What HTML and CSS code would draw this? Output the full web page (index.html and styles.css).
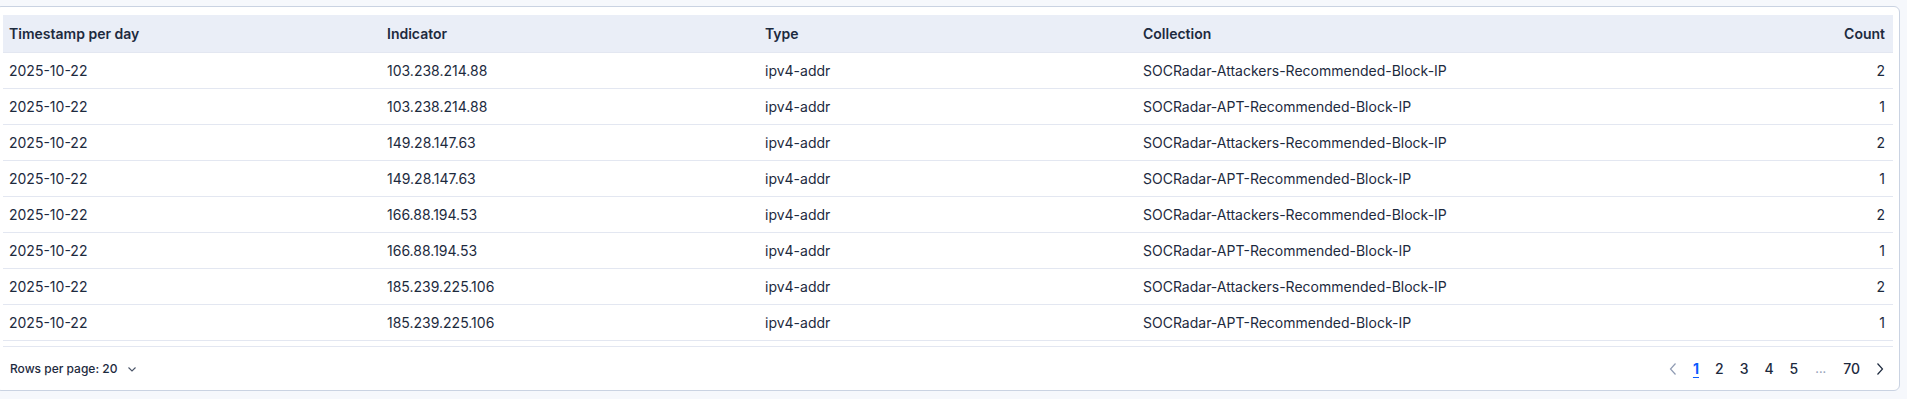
FILE: index.html
```html
<!DOCTYPE html>
<html>
<head>
<meta charset="utf-8">
<link rel="stylesheet" href="styles.css">
</head>
<body>
<div class="card">
  <table class="grid">
    <thead>
      <tr><th>Timestamp per day</th><th>Indicator</th><th>Type</th><th>Collection</th><th class="num">Count</th></tr>
    </thead>
    <tbody>
      <tr><td>2025-10-22</td><td>103.238.214.88</td><td>ipv4-addr</td><td>SOCRadar-Attackers-Recommended-Block-IP</td><td class="num">2</td></tr>
      <tr><td>2025-10-22</td><td>103.238.214.88</td><td>ipv4-addr</td><td>SOCRadar-APT-Recommended-Block-IP</td><td class="num">1</td></tr>
      <tr><td>2025-10-22</td><td>149.28.147.63</td><td>ipv4-addr</td><td>SOCRadar-Attackers-Recommended-Block-IP</td><td class="num">2</td></tr>
      <tr><td>2025-10-22</td><td>149.28.147.63</td><td>ipv4-addr</td><td>SOCRadar-APT-Recommended-Block-IP</td><td class="num">1</td></tr>
      <tr><td>2025-10-22</td><td>166.88.194.53</td><td>ipv4-addr</td><td>SOCRadar-Attackers-Recommended-Block-IP</td><td class="num">2</td></tr>
      <tr><td>2025-10-22</td><td>166.88.194.53</td><td>ipv4-addr</td><td>SOCRadar-APT-Recommended-Block-IP</td><td class="num">1</td></tr>
      <tr><td>2025-10-22</td><td>185.239.225.106</td><td>ipv4-addr</td><td>SOCRadar-Attackers-Recommended-Block-IP</td><td class="num">2</td></tr>
      <tr><td>2025-10-22</td><td>185.239.225.106</td><td>ipv4-addr</td><td>SOCRadar-APT-Recommended-Block-IP</td><td class="num">1</td></tr>
    </tbody>
  </table>
  <div class="footer">
    <div class="rows">Rows per page: 20
      <svg class="chev" width="10" height="10" viewBox="0 0 10 10"><path d="M1.5 3.5 L5 7 L8.5 3.5" fill="none" stroke="#4a5468" stroke-width="1.1"/></svg>
    </div>
    <div class="pager">
      <span class="pg arrow disabled"><svg width="10" height="14" viewBox="0 0 10 14"><path d="M7.5 1.5 L2.5 7 L7.5 12.5" fill="none" stroke="#8f9bb3" stroke-width="1.2"/></svg></span>
      <span class="pg active">1</span>
      <span class="pg">2</span>
      <span class="pg">3</span>
      <span class="pg">4</span>
      <span class="pg">5</span>
      <span class="pg dots">...</span>
      <span class="pg">70</span>
      <span class="pg arrow"><svg width="10" height="14" viewBox="0 0 10 14"><path d="M2.5 1.5 L7.5 7 L2.5 12.5" fill="none" stroke="#1d2a3e" stroke-width="1.2"/></svg></span>
    </div>
  </div>
</div>
</body>
</html>
```

FILE: styles.css
```css
html, body {
  margin: 0;
  padding: 0;
  background: #f6f8fc;
  font-family: Inter, "Noto Sans", sans-serif;
  color: #1d2a3e;
  overflow: hidden;
}
body {
  padding-top: 6px;
}
.card {
  margin: 0 7px 0 -5px;
  background: #fff;
  border: 1px solid #cad3e2;
  border-radius: 6px;
  padding: 8px 6px 0 7px;
  box-sizing: border-box;
  height: 385px;
}
.grid {
  width: 100%;
  table-layout: fixed;
  border-collapse: collapse;
  font-size: 14px;
}
.grid th {
  background: #eaeef7;
  font-weight: 600;
  text-align: left;
  height: 37px;
  padding: 0 6px;
  border-bottom: 1px solid #e3e7f1;
  color: #1d2a3e;
}
.grid td {
  height: 35px;
  padding: 0 6px;
  border-bottom: 1px solid #e3e7f1;
  color: #1d2a3e;
  white-space: nowrap;
}
.grid .num {
  text-align: right;
  padding-right: 8px;
}
.footer {
  margin-top: 5px;
  border-top: 1px solid #e3e7f1;
  height: 43px;
  display: flex;
  align-items: center;
  justify-content: space-between;
  padding: 0 1px 0 7px;
}
.rows {
  font-size: 12px;
  font-weight: 500;
  display: flex;
  align-items: center;
  gap: 10px;
}
.chev { display: block; }
.pager {
  display: flex;
  align-items: center;
  font-size: 14px;
  font-weight: 500;
}
.pg {
  padding: 0 8px;
  line-height: 24px;
  display: flex;
  align-items: center;
}
.pg.arrow { padding: 0 7px; }
.pg.active {
  color: #0b5cff;
  font-weight: 700;
  text-decoration: underline;
  text-underline-offset: 3px;
}
.pg.dots {
  color: #98a4bb;
  font-size: 12px;
  padding: 0 9px;
}
```
